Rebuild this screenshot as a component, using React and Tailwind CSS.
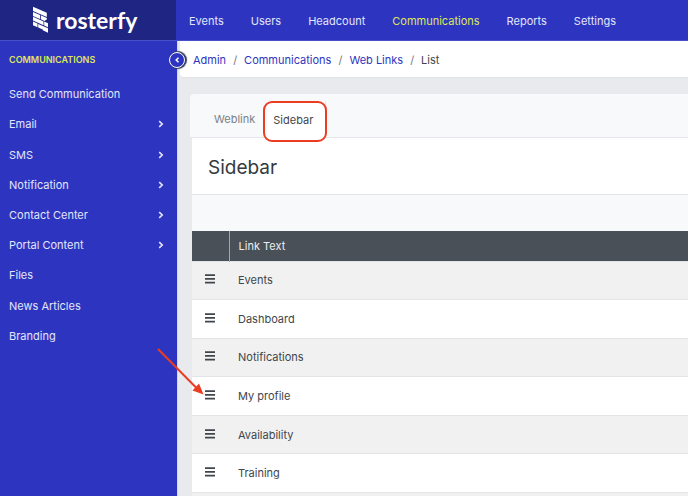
import React from "react";

const navItems = ["Events", "Users", "Headcount", "Communications", "Reports", "Settings"];

const sideItems = [
  { label: "Send Communication" },
  { label: "Email", nested: true },
  { label: "SMS", nested: true },
  { label: "Notification", nested: true },
  { label: "Contact Center", nested: true },
  { label: "Portal Content", nested: true },
  { label: "Files" },
  { label: "News Articles" },
  { label: "Branding" },
];

const crumbs = ["Admin", "Communications", "Web Links"];

const rows = ["Events", "Dashboard", "Notifications", "My profile", "Availability", "Training", ""];

function Logo() {
  return (
    <a href="#" className="flex h-full items-center gap-[7px] pl-8 text-white">
      <svg width="17" height="28" viewBox="0 0 17 28" fill="currentColor" aria-hidden="true">
        <path d="M1 0.800 L14.800 6.800 V11 L1 5Z" />
        <path d="M1 5.900 L8 9 V13 L1 9.900Z" />
        <path d="M8.800 9.300 L14.800 12 V13.500 L12.300 14.900 L8.800 13.300Z" />
        <path d="M1 10.800 L11.500 15.500 V19.300 L1 14.600Z" />
        <path d="M12.200 15.600 L16 17.300 V21.300 L12.200 19.600Z" />
        <path d="M1 15.500 L5.500 17.500 V21.300 L1 19.300Z" />
        <path d="M6.200 17.900 L16 22.300 V26.700 L10.800 24.300 V23.600 L6.200 21.600Z" />
      </svg>
      <span className="font-[Lato,sans-serif] text-[23px] leading-7 font-bold">rosterfy</span>
    </a>
  );
}

function ChevronRight() {
  return (
    <svg width="6" height="8" viewBox="0 0 6 8" fill="none" stroke="currentColor" strokeWidth="1.600" aria-hidden="true">
      <path d="M1.200 1.200 L4.200 4 L1.200 6.800" />
    </svg>
  );
}

function DragHandle({ label }) {
  return (
    <button type="button" aria-label={"Reorder " + label} className="block text-[#40464c]">
      <svg width="10" height="10" viewBox="0 0 10 10" fill="currentColor" aria-hidden="true">
        <path d="M0 0.200h10v1.800H0zM0 4h10v1.800H0zM0 7.800h10v1.800H0z" />
      </svg>
    </button>
  );
}

export default function App() {
  return (
    <div className="relative flex h-screen flex-col overflow-hidden bg-[#e9eaee] font-[Inter,sans-serif] text-[11px] leading-4 text-[#40464c]">
      <header className="flex h-[41px] shrink-0 border-b border-[#4650c8] bg-[#2d35c0] text-[#e3e5fa]">
        <div className="w-44 shrink-0 bg-[#1f2583]">
          <Logo />
        </div>
        <nav className="flex items-center gap-[27px] pt-px pl-[13px]">
          {navItems.map((item) => (
            <a key={item} href="#" className={item === "Communications" ? "text-[#dfe757]" : ""}>
              {item}
            </a>
          ))}
        </nav>
      </header>

      <div className="flex min-h-0 flex-1">
        <aside className="relative w-[178px] shrink-0 border-r border-[#d3d5f0] bg-[#2d35c0] text-[#e3e5fa]">
          <h2 className="px-[9px] pt-[11px] text-[9px] font-semibold text-[#dfe757]">COMMUNICATIONS</h2>
          <ul className="mt-[11px] flex h-[272px] flex-col">
            {sideItems.map((item) => (
              <li key={item.label} className="flex-1">
                <a href="#" className="flex h-full items-center justify-between pr-[13px] pl-[9px]">
                  {item.label}
                  {item.nested && <ChevronRight />}
                </a>
              </li>
            ))}
          </ul>
          <button
            type="button"
            aria-label="Collapse menu"
            className="absolute top-[11px] -right-2 z-10 flex size-4 items-center justify-center rounded-full border border-white bg-[#2d35c0] text-white shadow-[1px_0_1px_1px_#343a60]"
          >
            <svg width="5" height="6" viewBox="0 0 5 6" fill="none" stroke="currentColor" strokeWidth="1.500" aria-hidden="true">
              <path d="M3.500 0.800 L1.200 3 L3.500 5.200" />
            </svg>
          </button>
        </aside>

        <main className="min-w-0 flex-1">
          <nav aria-label="Breadcrumb" className="ml-0.5 flex h-[37px] items-center rounded-bl border-b border-[#e0e2e6] bg-white pt-0.5 pl-[13px]">
            {crumbs.map((crumb) => (
              <React.Fragment key={crumb}>
                <a href="#" className="text-[#2d35c0]">{crumb}</a>
                <span className="px-[7px] text-[#737980]">/</span>
              </React.Fragment>
            ))}
            <span>List</span>
          </nav>

          <section className="mt-4 ml-3">
            <div className="flex h-11 items-end rounded-tl border-b border-[#e6e8eb] bg-[#f7f9fb] pl-3">
              <button type="button" className="h-9 px-3 text-[#7b8187]">Weblink</button>
              <div className="relative">
                <button type="button" className="-mb-px block h-[37px] border-r border-[#e6e8eb] bg-white pr-3 pl-1.5">
                  Sidebar
                </button>
                <span className="pointer-events-none absolute top-0 -left-1 h-[41px] w-16 rounded-[9px] border-2 border-[#ea3d22]" />
              </div>
            </div>

            <div className="ml-0.5 bg-white">
              <h1 className="flex h-[57px] items-center border-b border-[#e2e4e7] pt-1 pl-4 text-[19px] leading-6 text-[#343a40]">
                Sidebar
              </h1>
              <div className="h-9 bg-[#f7f9fb]" />
              <table className="h-[300px] w-full border-collapse text-left">
                <thead>
                  <tr className="h-[30px] bg-[#495057] text-[#eceef0]">
                    <th className="w-[37px] border-r border-[#a3a7ab] p-0" aria-label="Order" />
                    <th className="py-0 pl-[9px] font-normal">Link Text</th>
                  </tr>
                </thead>
                <tbody>
                  {rows.map((row, index) => (
                    <tr key={index} className="h-[38px] border-t border-[#e2e4e7] odd:bg-[#f1f1f1]">
                      <td className="pb-0.5 pl-[13px]">
                        <DragHandle label={row} />
                      </td>
                      <td className="py-0 pl-[9px]">{row}</td>
                    </tr>
                  ))}
                </tbody>
              </table>
            </div>
          </section>
        </main>
      </div>

      <svg className="pointer-events-none absolute top-[346px] left-[156px]" width="50" height="52" viewBox="0 0 50 52" aria-hidden="true">
        <path d="M2 3 L40 41.500" stroke="#ea3d22" strokeWidth="2" fill="none" />
        <path d="M47.500 48.500 L36.500 44.500 L43 37.500Z" fill="#ea3d22" />
      </svg>
    </div>
  );
}
